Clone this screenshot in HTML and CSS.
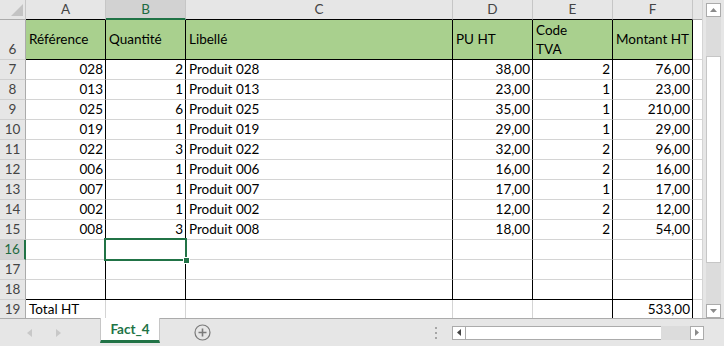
FILE: index.html
```html
<!DOCTYPE html>
<html lang="fr">
<head>
    <meta charset="UTF-8">
    <title>Fact_4</title>
    <link rel="stylesheet" href="styles.css">
</head>
<body>
    <div class="app">
        <div class="main">
            <div class="sheet">
                <!-- column headers -->
                <div class="row hdr">
                    <div class="corner">
                        <svg width="12" height="12" viewBox="0 0 12 12"><polygon points="12,0 12,12 0,12" fill="#c3c3c3"/></svg>
                    </div>
                    <div class="ch">A</div>
                    <div class="ch sel">B</div>
                    <div class="ch">C</div>
                    <div class="ch">D</div>
                    <div class="ch">E</div>
                    <div class="ch">F</div>
                    <div class="ch x"></div>
                </div>

                <div class="row boxed edge titles">
                    <div class="rh">6</div>
                    <div class="c">Référence</div>
                    <div class="c">Quantité</div>
                    <div class="c">Libellé</div>
                    <div class="c">PU HT</div>
                    <div class="c wrap">Code<br>TVA</div>
                    <div class="c">Montant HT</div>
                    <div class="c x"></div>
                </div>

                <div class="row boxed">
                    <div class="rh">7</div>
                    <div class="c n">028</div><div class="c n">2</div><div class="c">Produit 028</div>
                    <div class="c n">38,00</div><div class="c n">2</div><div class="c n">76,00</div><div class="c x"></div>
                </div>
                <div class="row boxed">
                    <div class="rh">8</div>
                    <div class="c n">013</div><div class="c n">1</div><div class="c">Produit 013</div>
                    <div class="c n">23,00</div><div class="c n">1</div><div class="c n">23,00</div><div class="c x"></div>
                </div>
                <div class="row boxed">
                    <div class="rh">9</div>
                    <div class="c n">025</div><div class="c n">6</div><div class="c">Produit 025</div>
                    <div class="c n">35,00</div><div class="c n">1</div><div class="c n">210,00</div><div class="c x"></div>
                </div>
                <div class="row boxed">
                    <div class="rh">10</div>
                    <div class="c n">019</div><div class="c n">1</div><div class="c">Produit 019</div>
                    <div class="c n">29,00</div><div class="c n">1</div><div class="c n">29,00</div><div class="c x"></div>
                </div>
                <div class="row boxed">
                    <div class="rh">11</div>
                    <div class="c n">022</div><div class="c n">3</div><div class="c">Produit 022</div>
                    <div class="c n">32,00</div><div class="c n">2</div><div class="c n">96,00</div><div class="c x"></div>
                </div>
                <div class="row boxed">
                    <div class="rh">12</div>
                    <div class="c n">006</div><div class="c n">1</div><div class="c">Produit 006</div>
                    <div class="c n">16,00</div><div class="c n">2</div><div class="c n">16,00</div><div class="c x"></div>
                </div>
                <div class="row boxed">
                    <div class="rh">13</div>
                    <div class="c n">007</div><div class="c n">1</div><div class="c">Produit 007</div>
                    <div class="c n">17,00</div><div class="c n">1</div><div class="c n">17,00</div><div class="c x"></div>
                </div>
                <div class="row boxed">
                    <div class="rh">14</div>
                    <div class="c n">002</div><div class="c n">1</div><div class="c">Produit 002</div>
                    <div class="c n">12,00</div><div class="c n">2</div><div class="c n">12,00</div><div class="c x"></div>
                </div>
                <div class="row boxed">
                    <div class="rh">15</div>
                    <div class="c n">008</div><div class="c n">3</div><div class="c">Produit 008</div>
                    <div class="c n">18,00</div><div class="c n">2</div><div class="c n">54,00</div><div class="c x"></div>
                </div>
                <div class="row boxed">
                    <div class="rh sel">16</div>
                    <div class="c"></div>
                    <div class="c active"><span class="cursor"><span class="handle"></span></span></div>
                    <div class="c"></div><div class="c"></div><div class="c"></div><div class="c"></div><div class="c x"></div>
                </div>
                <div class="row boxed">
                    <div class="rh">17</div>
                    <div class="c"></div><div class="c"></div><div class="c"></div><div class="c"></div><div class="c"></div><div class="c"></div><div class="c x"></div>
                </div>
                <div class="row boxed edge">
                    <div class="rh">18</div>
                    <div class="c"></div><div class="c"></div><div class="c"></div><div class="c"></div><div class="c"></div><div class="c"></div><div class="c x"></div>
                </div>
                <div class="row total">
                    <div class="rh">19</div>
                    <div class="c">Total HT</div><div class="c"></div><div class="c"></div><div class="c"></div>
                    <div class="c dark"></div><div class="c n dark">533,00</div><div class="c x"></div>
                </div>
            </div>

            <!-- vertical scrollbar -->
            <div class="vscroll">
                <div class="sbtn">
                    <svg width="7" height="4" viewBox="0 0 7 4"><polygon points="0,4 7,4 3.5,0" fill="#8a8a8a"/></svg>
                </div>
                <div class="vtrack"><div class="vthumb"></div></div>
                <div class="sbtn">
                    <svg width="7" height="4" viewBox="0 0 7 4"><polygon points="0,0 7,0 3.5,4" fill="#8a8a8a"/></svg>
                </div>
            </div>
        </div>

        <!-- sheet tabs -->
        <div class="tabs">
            <div class="nav">
                <svg width="5" height="8" viewBox="0 0 5 8"><polygon points="5,0 5,8 0,4" fill="#c8c8c8"/></svg>
                <svg width="5" height="8" viewBox="0 0 5 8"><polygon points="0,0 0,8 5,4" fill="#c8c8c8"/></svg>
            </div>
            <div class="tab">Fact_4</div>
            <div class="add">
                <svg width="17" height="17" viewBox="0 0 17 17">
                    <circle cx="8.5" cy="8.5" r="7.5" fill="none" stroke="#7a7a7a" stroke-width="1.2"/>
                    <path d="M8.5 4.5v8M4.5 8.5h8" stroke="#7a7a7a" stroke-width="1.6"/>
                </svg>
            </div>
            <div class="dots"><span></span><span></span><span></span></div>
            <div class="hscroll">
                <div class="hbtn">
                    <svg width="4" height="7" viewBox="0 0 4 7"><polygon points="4,0 4,7 0,3.5" fill="#444"/></svg>
                </div>
                <div class="hthumb"></div>
                <div class="htrack"></div>
                <div class="hbtn">
                    <svg width="4" height="7" viewBox="0 0 4 7"><polygon points="0,0 0,7 4,3.5" fill="#8a8a8a"/></svg>
                </div>
            </div>
        </div>
    </div>
</body>
</html>
```

FILE: styles.css
```css
body {
    margin: 0;
    font-family: Lato, "Liberation Sans", sans-serif;
    font-size: 13.5px;
    color: #000;
    background: #fff;
}
.app {
    width: 724px;
    height: 346px;
    display: flex;
    flex-direction: column;
    overflow: hidden;
}
.main {
    display: flex;
    height: 318px;
}

/* grid */
.sheet {
    display: grid;
    grid-template-columns: 26px 80px 80px 267px 80px 80px 80px 9px;
    grid-template-rows: 20px 40px repeat(13, 20px);
    width: 702px;
    height: 318px;
    overflow: hidden;
}
.row {
    display: contents;
}
.corner,
.ch,
.rh,
.c {
    box-sizing: border-box;
}
.corner {
    background: #e6e6e6;
    border-right: 1px solid #c6c6c6;
    border-bottom: 1px solid #ababab;
    display: flex;
    align-items: flex-end;
    justify-content: flex-end;
    padding: 0 2px 3px 0;
}
.ch {
    background: #e6e6e6;
    color: #444;
    text-align: center;
    line-height: 19px;
    border-right: 1px solid #c6c6c6;
    border-bottom: 1px solid #000;
}
.ch.sel {
    background: #d2d2d2;
    color: #1e6b41;
    border-bottom: 2px solid #217346;
}
.ch.x {
    border-right: none;
    border-bottom-color: #ababab;
}
.rh {
    background: #e6e6e6;
    color: #444;
    line-height: 19px;
    border-right: 1px solid #ababab;
    border-bottom: 1px solid #cfcfcf;
    display: flex;
    align-items: flex-end;
    justify-content: center;
}
.rh.sel {
    background: #d2d2d2;
    color: #1e6b41;
    border-right: 2px solid #217346;
}
.c {
    line-height: 19px;
    padding: 0 3px;
    white-space: nowrap;
    border-right: 1px solid #d4d4d4;
    border-bottom: 1px solid #d4d4d4;
}
.c.n {
    text-align: right;
    padding-right: 2px;
}
.c.x {
    border-right: none;
}

/* black borders of the invoice */
.boxed .c:not(.x),
.total .c.dark {
    border-right-color: #000;
}
.edge .c:not(.x) {
    border-bottom-color: #000;
}
.titles .c:not(.x) {
    background: #a9d08e;
    display: flex;
    align-items: center;
}
.titles .c.wrap {
    white-space: normal;
}

/* current cell */
.active {
    position: relative;
}
.cursor {
    position: absolute;
    left: -2px;
    top: -2px;
    width: 83px;
    height: 23px;
    border: 2px solid #217346;
    box-sizing: border-box;
}
.handle {
    position: absolute;
    right: -4px;
    bottom: -4px;
    width: 5px;
    height: 5px;
    background: #217346;
    outline: 1px solid #fff;
}

/* vertical scrollbar */
.vscroll {
    width: 22px;
    background: #e6e6e6;
    border-left: 1px solid #d4d4d4;
    box-sizing: border-box;
    display: flex;
    flex-direction: column;
    padding: 3px 0 0 3px;
}
.sbtn {
    width: 15px;
    height: 14px;
    box-sizing: border-box;
    background: #fff;
    border: 1px solid #ababab;
    display: flex;
    align-items: center;
    justify-content: center;
}
.vtrack {
    flex: 1;
    width: 15px;
    background: #dcdcdc;
    padding-top: 39px;
    box-sizing: border-box;
}
.vthumb {
    height: 207px;
    background: #fff;
    border: 1px solid #c6c6c6;
    box-sizing: border-box;
}

/* tabs */
.tabs {
    height: 28px;
    box-sizing: border-box;
    background: #e6e6e6;
    border-top: 1px solid #ababab;
    display: flex;
    align-items: center;
}
.nav {
    width: 100px;
    display: flex;
    gap: 24px;
    padding-left: 27px;
    box-sizing: border-box;
}
.tab {
    align-self: flex-start;
    margin-top: -1px;
    width: 60px;
    height: 25px;
    box-sizing: border-box;
    background: #fff;
    border-left: 1px solid #c6c6c6;
    border-right: 1px solid #c6c6c6;
    border-bottom: 3px solid #217346;
    color: #217346;
    font-weight: bold;
    text-align: center;
    line-height: 22px;
}
.add {
    margin-left: 34px;
    display: flex;
}
.dots {
    margin-left: auto;
    margin-right: 15px;
    display: flex;
    flex-direction: column;
    gap: 3px;
}
.dots span {
    width: 2px;
    height: 2px;
    background: #a6a6a6;
}
.hscroll {
    display: flex;
    height: 14px;
    margin-right: 20px;
}
.hbtn {
    width: 14px;
    box-sizing: border-box;
    background: #fff;
    border: 1px solid #ababab;
    display: flex;
    align-items: center;
    justify-content: center;
}
.hthumb {
    width: 195px;
    background: #fff;
    border-top: 1px solid #ababab;
    border-bottom: 1px solid #ababab;
    box-sizing: border-box;
}
.htrack {
    width: 29px;
    background: #dcdcdc;
}
```
